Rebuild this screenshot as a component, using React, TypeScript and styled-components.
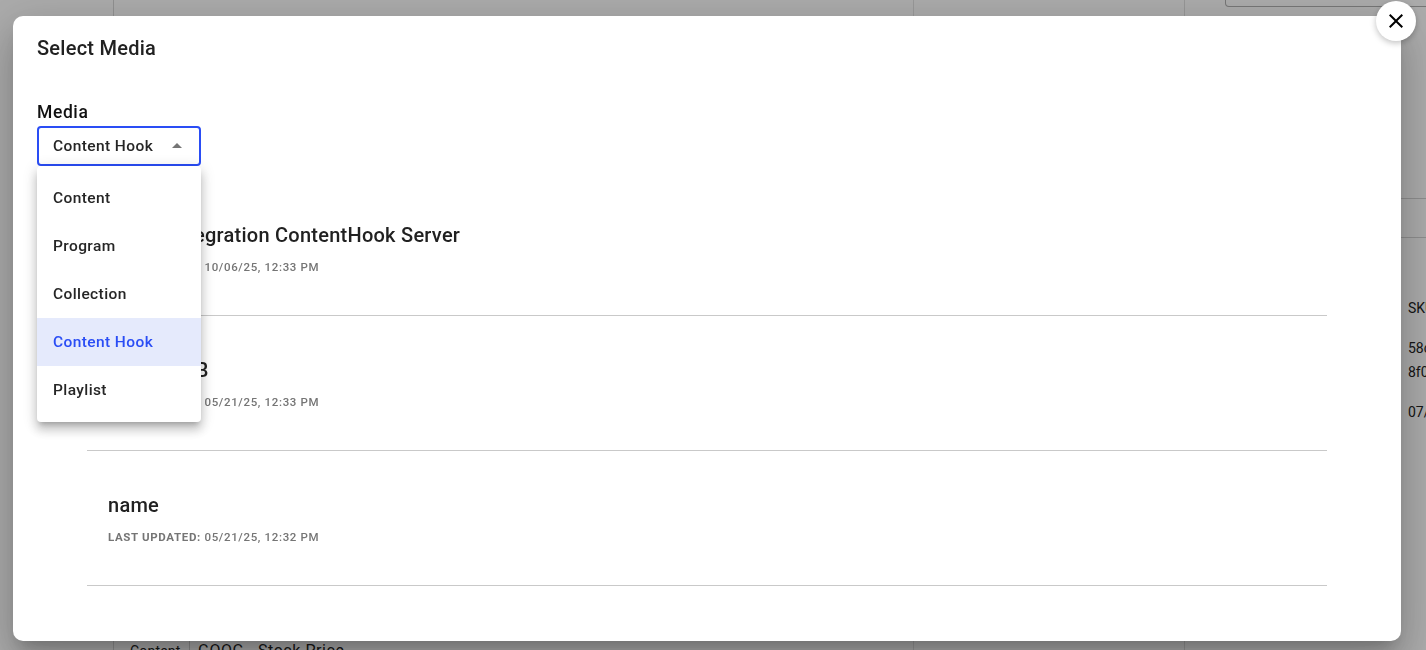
import styled, { createGlobalStyle } from "styled-components";

const GlobalStyle = createGlobalStyle`
  html, body {
    margin: 0;
    height: 100%;
    overflow: hidden;
    background: #fff;
    font-family: Roboto, "Liberation Sans", sans-serif;
  }
`;

const mediaOptions = ["Content", "Program", "Collection", "Content Hook", "Playlist"];

const rows = [
  { name: "Media Integration ContentHook Server", updated: "10/06/25, 12:33 PM" },
  { name: "Test Hub B", updated: "05/21/25, 12:33 PM" },
  { name: "name", updated: "05/21/25, 12:32 PM" },
];

const App = () => {
  return (
    <>
      <GlobalStyle />
      <Page>
        <Sidebar />
        <Main>
          <Spacer />
          <SummaryRow>
            <SummaryLabel>Content</SummaryLabel>
            <SummaryValue>GOOG - Stock Price</SummaryValue>
          </SummaryRow>
        </Main>
        <Middle />
        <Details>
          <FilterInput />
          <DetailBand />
          <DetailText>SKU</DetailText>
          <DetailId>
            58c
            <br />
            8f0
          </DetailId>
          <DetailText>07/</DetailText>
        </Details>
      </Page>
      <Overlay>
        <Modal>
          <Title>Select Media</Title>
          <CloseButton aria-label="Close">
            <svg width="24" height="24" viewBox="0 0 24 24" fill="currentColor">
              <path d="M19 6.41 17.59 5 12 10.59 6.41 5 5 6.41 10.59 12 5 17.59 6.41 19 12 13.41 17.59 19 19 17.59 13.41 12z" />
            </svg>
          </CloseButton>
          <Content>
            <FieldLabel>Media</FieldLabel>
            <SelectWrap>
              <SelectBox>
                <span>Content Hook</span>
                <svg width="24" height="24" viewBox="0 0 24 24" fill="#757575">
                  <path d="M7 14l5-5 5 5z" />
                </svg>
              </SelectBox>
              <Menu>
                {mediaOptions.map((option) => (
                  <MenuItem key={option} $selected={option === "Content Hook"}>
                    {option}
                  </MenuItem>
                ))}
              </Menu>
            </SelectWrap>
            <List>
              {rows.map((row) => (
                <Row key={row.updated + row.name}>
                  <RowName>{row.name}</RowName>
                  <RowMeta>
                    <b>LAST UPDATED:</b> {row.updated}
                  </RowMeta>
                </Row>
              ))}
            </List>
          </Content>
        </Modal>
      </Overlay>
    </>
  );
};

const Page = styled.div`
  display: flex;
  height: 650px;
  width: 1426px;
  overflow: hidden;
  color: #222;
`;

const Sidebar = styled.div`
  width: 114px;
  flex: none;
  border-right: 1px solid #d8d8d8;
  box-sizing: border-box;
`;

const Main = styled.div`
  width: 800px;
  flex: none;
  box-sizing: border-box;
  border-right: 1px solid #e4e4e4;
  display: flex;
  flex-direction: column;
`;

const Spacer = styled.div`
  height: 637px;
  flex: none;
`;

const SummaryRow = styled.div`
  display: flex;
  align-items: stretch;
  height: 40px;
  font-size: 16px;
  letter-spacing: 0.55px;
`;

const SummaryLabel = styled.div`
  width: 76px;
  padding: 6px 0 0 16px;
  box-sizing: border-box;
  font-size: 14px;
  letter-spacing: 0.2px;
  border-right: 1px solid #d0d0d0;
`;

const SummaryValue = styled.div`
  padding: 4px 0 0 8px;
`;

const Middle = styled.div`
  width: 271px;
  flex: none;
  box-sizing: border-box;
  border-right: 1px solid #e0e0e0;
`;

const Details = styled.div`
  flex: 1;
  padding-left: 40px;
  font-size: 14px;
  line-height: 24px;
  white-space: nowrap;
`;

const FilterInput = styled.div`
  height: 6px;
  margin-top: 0;
  border: 1px solid #b0b0b0;
  border-top: none;
  border-radius: 0 0 4px 4px;
`;

const DetailBand = styled.div`
  height: 38px;
  margin: 191px -40px 0 -40px;
  border-top: 1px solid #d4d4d4;
  border-bottom: 1px solid #d4d4d4;
`;

const DetailText = styled.div`
  padding-left: 183px;
  margin-top: 58px;

  & ~ & {
    margin-top: 16px;
  }
`;

const DetailId = styled.div`
  padding-left: 183px;
  margin-top: 16px;
`;

const Overlay = styled.div`
  position: fixed;
  inset: 0;
  background: rgba(0, 0, 0, 0.33);
  display: flex;
  padding: 16px 25px 9px 13px;
  box-sizing: border-box;
`;

const Modal = styled.div`
  position: relative;
  flex: 1;
  background: #fff;
  border-radius: 10px;
  box-shadow: 0 11px 15px -7px rgba(0, 0, 0, 0.2), 0 24px 38px 3px rgba(0, 0, 0, 0.14),
    0 9px 46px 8px rgba(0, 0, 0, 0.12);
`;

const Title = styled.h2`
  margin: 0;
  padding: 16px 24px;
  font-size: 20px;
  font-weight: 500;
  line-height: 32px;
  letter-spacing: 0.25px;
  color: #212121;
`;

const CloseButton = styled.button`
  position: absolute;
  top: -15px;
  right: -15px;
  width: 40px;
  height: 40px;
  padding: 0;
  border: none;
  border-radius: 50%;
  background: #fff;
  color: #000;
  display: flex;
  align-items: center;
  justify-content: center;
  box-shadow: 0 2px 6px rgba(0, 0, 0, 0.25);
`;

const Content = styled.div`
  padding: 20px 74px 0 24px;
`;

const FieldLabel = styled.div`
  font-size: 17.5px;
  font-weight: 500;
  line-height: 24px;
  letter-spacing: 0.6px;
  color: #111;
  margin-bottom: 2px;
`;

const SelectWrap = styled.div`
  position: relative;
  width: 164px;
`;

const SelectBox = styled.div`
  height: 40px;
  box-sizing: border-box;
  border: 2px solid #2a4df5;
  border-radius: 4px;
  padding: 0 0 0 14px;
  display: flex;
  align-items: center;
  justify-content: space-between;
  font-size: 15.5px;
  font-weight: 500;
  letter-spacing: 0.4px;
  color: #262626;

  svg {
    margin-right: 10px;
  }
`;

const Menu = styled.div`
  position: absolute;
  top: 40px;
  left: 0;
  right: 0;
  padding: 8px 0;
  background: #fff;
  border-radius: 4px;
  z-index: 2;
  box-shadow: 0 5px 5px -3px rgba(0, 0, 0, 0.2), 0 8px 10px 1px rgba(0, 0, 0, 0.14),
    0 3px 14px 2px rgba(0, 0, 0, 0.12);
`;

const MenuItem = styled.div<{ $selected: boolean }>`
  height: 48px;
  padding-left: 16px;
  display: flex;
  align-items: center;
  font-size: 15.5px;
  font-weight: 500;
  letter-spacing: 0.4px;
  color: ${({ $selected }) => ($selected ? "#2a4df5" : "#262626")};
  background: ${({ $selected }) => ($selected ? "#e5eafc" : "transparent")};
`;

const List = styled.div`
  margin: 15px 0 0 50px;
`;

const Row = styled.div`
  height: 135px;
  box-sizing: border-box;
  padding: 39px 21px 0;
  border-bottom: 1px solid #c9c9c9;
`;

const RowName = styled.div`
  font-size: 20px;
  font-weight: 500;
  line-height: 30px;
  letter-spacing: 0.25px;
  color: #212121;
`;

const RowMeta = styled.div`
  margin-top: 9px;
  font-size: 11.5px;
  font-weight: 500;
  line-height: 16px;
  letter-spacing: 0.65px;
  color: #757575;

  b {
    font-weight: 700;
  }
`;

export default App;
